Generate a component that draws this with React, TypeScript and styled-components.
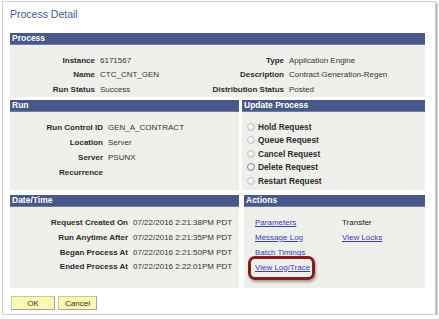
import React from 'react'
import styled, { createGlobalStyle } from 'styled-components'

const GlobalStyle = createGlobalStyle`
  body {
    margin: 0;
    background: #fff;
    font-family: "Liberation Sans", Arial, sans-serif;
  }
`

const Frame = styled.div`
  box-sizing: border-box;
  width: 434px;
  height: 314px;
  margin: 1px 0 0 2px;
  padding: 0 0 0 7px;
  background: #fff;
  border: 1px solid #d2d2d2;
  box-shadow: 1px 2px 2px rgba(0, 0, 0, 0.45);
`

const Title = styled.h1`
  margin: 6px 0 0 0;
  height: 12px;
  line-height: 12px;
  font-size: 10.5px;
  font-weight: normal;
  color: #3d5a9a;
`

const Panel = styled.section<{ $width?: number }>`
  width: ${p => (p.$width ? `${p.$width}px` : 'auto')};
  display: flex;
  flex-direction: column;
`

const PanelHeader = styled.div`
  height: 11px;
  line-height: 11px;
  padding-left: 2px;
  background: #485889;
  border-bottom: 1px solid #6f7ca6;
  color: #fff;
  font-size: 8.5px;
  font-weight: bold;
`

const PanelBody = styled.div<{ $height: number; $top: number }>`
  box-sizing: border-box;
  height: ${p => p.$height}px;
  padding-top: ${p => p.$top}px;
  background: #eff0eb;
`

const Stack = styled.div`
  width: 415px;
  margin-top: 13px;
  display: flex;
  flex-direction: column;
`

const Row = styled.div<{ $gap: number; $top: number }>`
  display: flex;
  gap: ${p => p.$gap}px;
  margin-top: ${p => p.$top}px;
`

const FieldGrid = styled.div<{ $cols: string; $row: number }>`
  display: grid;
  grid-template-columns: ${p => p.$cols};
  grid-auto-rows: ${p => p.$row}px;
  align-items: center;
  font-size: 8px;
`

const Label = styled.div`
  text-align: right;
  padding-right: 5px;
  font-weight: bold;
  color: #2b2b2b;
  white-space: nowrap;
`

const Value = styled.div`
  color: #333;
  white-space: nowrap;
`

const RadioList = styled.div`
  display: flex;
  flex-direction: column;
  padding-left: 5px;
`

const RadioRow = styled.label`
  display: flex;
  align-items: center;
  height: 13.5px;
  gap: 3px;
  font-size: 8.3px;
  font-weight: bold;
  color: #2b2b2b;
`

const RadioDot = styled.span<{ $dark?: boolean }>`
  box-sizing: border-box;
  width: 8px;
  height: 8px;
  border-radius: 50%;
  border: 1px solid ${p => (p.$dark ? '#8a8a8a' : '#c4c4c4')};
  background: radial-gradient(circle at 40% 35%, #ffffff 0%, #e9e9e9 60%, #d2d2d2 100%);
`

const Link = styled.a<{ $plain?: boolean }>`
  color: #3b3bb5;
  text-decoration: ${p => (p.$plain ? 'none' : 'underline')};
  cursor: pointer;
`

const Text = styled.span`
  color: #222;
`

const Highlight = styled.span`
  position: relative;
  display: inline-block;

  &::after {
    content: '';
    position: absolute;
    left: -7px;
    right: -5px;
    top: -7px;
    bottom: -8px;
    border: 3px solid #861c1f;
    border-radius: 7px;
    box-shadow: 1px 2px 3px rgba(0, 0, 0, 0.35);
  }
`

const ActionCell = styled.div<{ $indent?: boolean }>`
  white-space: nowrap;
  padding-left: ${p => (p.$indent ? '11px' : '0')};
`

const ButtonBar = styled.div`
  display: flex;
  gap: 3px;
  margin-top: 8px;
  padding-left: 1px;
`

const Button = styled.button<{ $width: number }>`
  box-sizing: border-box;
  width: ${p => p.$width}px;
  height: 14px;
  padding: 0;
  background: #fbf8b4;
  border: 1px solid #c9c7a0;
  border-right-color: #a8a68a;
  border-bottom-color: #a8a68a;
  font-family: inherit;
  font-size: 8px;
  color: #333;
`

const processFields = [
  ['Instance', '6171567', 'Type', 'Application Engine'],
  ['Name', 'CTC_CNT_GEN', 'Description', 'Contract Generation-Regen'],
  ['Run Status', 'Success', 'Distribution Status', 'Posted'],
]

const runFields = [
  ['Run Control ID', 'GEN_A_CONTRACT'],
  ['Location', 'Server'],
  ['Server', 'PSUNX'],
  ['Recurrence', ''],
]

const dateFields = [
  ['Request Created On', '07/22/2016 2:21:38PM PDT'],
  ['Run Anytime After', '07/22/2016 2:21:35PM PDT'],
  ['Began Process At', '07/22/2016 2:21:50PM PDT'],
  ['Ended Process At', '07/22/2016 2:22:01PM PDT'],
]

const requests = ['Hold Request', 'Queue Request', 'Cancel Request', 'Delete Request', 'Restart Request']

const App = () => {
  return (
    <>
      <GlobalStyle />
      <Frame>
        <Title>Process Detail</Title>
        <Stack>
          <Panel>
            <PanelHeader>Process</PanelHeader>
            <PanelBody $height={52} $top={8}>
              <FieldGrid $cols='90px 75px 114px 1fr' $row={14.5}>
                {processFields.map(([l1, v1, l2, v2]) => (
                  <React.Fragment key={l1}>
                    <Label>{l1}</Label>
                    <Value>{v1}</Value>
                    <Label>{l2}</Label>
                    <Value>{v2}</Value>
                  </React.Fragment>
                ))}
              </FieldGrid>
            </PanelBody>
          </Panel>

          <Row $gap={3} $top={3}>
            <Panel $width={229}>
              <PanelHeader>Run</PanelHeader>
              <PanelBody $height={78} $top={7.5}>
                <FieldGrid $cols='98px 1fr' $row={15}>
                  {runFields.map(([l, v]) => (
                    <React.Fragment key={l}>
                      <Label>{l}</Label>
                      <Value>{v}</Value>
                    </React.Fragment>
                  ))}
                </FieldGrid>
              </PanelBody>
            </Panel>
            <Panel $width={183}>
              <PanelHeader>Update Process</PanelHeader>
              <PanelBody $height={78} $top={8}>
                <RadioList>
                  {requests.map(r => (
                    <RadioRow key={r}>
                      <RadioDot $dark={r === 'Delete Request'} />
                      {r}
                    </RadioRow>
                  ))}
                </RadioList>
              </PanelBody>
            </Panel>
          </Row>

          <Row $gap={5} $top={5}>
            <Panel $width={229}>
              <PanelHeader>Date/Time</PanelHeader>
              <PanelBody $height={81} $top={8.5}>
                <FieldGrid $cols='123px 1fr' $row={14.7}>
                  {dateFields.map(([l, v]) => (
                    <React.Fragment key={l}>
                      <Label>{l}</Label>
                      <Value>{v}</Value>
                    </React.Fragment>
                  ))}
                </FieldGrid>
              </PanelBody>
            </Panel>
            <Panel $width={181}>
              <PanelHeader>Actions</PanelHeader>
              <PanelBody $height={81} $top={7.5}>
                <FieldGrid $cols='98px 1fr' $row={15}>
                  <ActionCell $indent><Link>Parameters</Link></ActionCell>
                  <ActionCell><Text>Transfer</Text></ActionCell>
                  <ActionCell $indent><Link>Message Log</Link></ActionCell>
                  <ActionCell><Link>View Locks</Link></ActionCell>
                  <ActionCell $indent><Link $plain>Batch Timings</Link></ActionCell>
                  <ActionCell />
                  <ActionCell $indent>
                    <Highlight><Link>View Log/Trace</Link></Highlight>
                  </ActionCell>
                  <ActionCell />
                </FieldGrid>
              </PanelBody>
            </Panel>
          </Row>
        </Stack>

        <ButtonBar>
          <Button $width={44}>OK</Button>
          <Button $width={39}>Cancel</Button>
        </ButtonBar>
      </Frame>
    </>
  )
}

export default App
